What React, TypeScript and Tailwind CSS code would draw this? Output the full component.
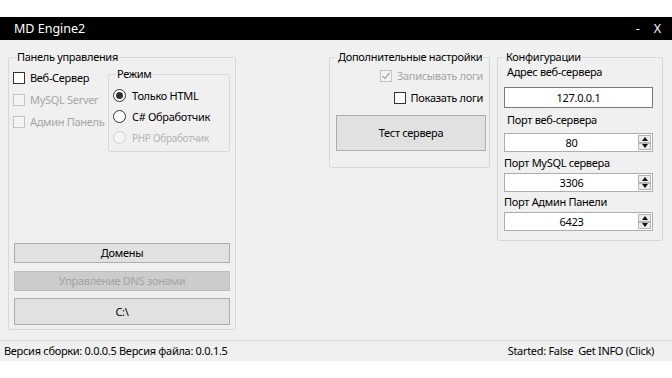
import React from 'react';

const font = "font-['Noto_Sans',sans-serif]";

interface CheckProps {
  label: string;
  checked?: boolean;
  disabled?: boolean;
}

const CheckBox: React.FC<CheckProps> = ({ label, checked = false, disabled = false }) => (
  <div className="flex h-[22px] items-center gap-[5px] whitespace-nowrap">
    <span
      className={`flex h-[12px] w-[12px] shrink-0 items-center justify-center border ${
        disabled ? 'border-[#c4c4c4] bg-[#f4f4f4]' : 'border-[#333333] bg-white'
      }`}
    >
      {checked && (
        <svg width="10" height="10" viewBox="0 0 10 10">
          <path d="M1.5 5 L4 7.5 L8.5 2" fill="none" stroke={disabled ? '#a8a8a8' : '#333'} strokeWidth="1.4" />
        </svg>
      )}
    </span>
    <span className={disabled ? 'text-[#a6a6a6]' : 'text-black'}>{label}</span>
  </div>
);

const Radio: React.FC<CheckProps> = ({ label, checked = false, disabled = false }) => (
  <div className="flex h-[21px] items-center gap-[6px] whitespace-nowrap">
    <span
      className={`flex h-[13px] w-[13px] shrink-0 items-center justify-center rounded-full border ${
        disabled ? 'border-[#d0d0d0] bg-[#f4f4f4]' : 'border-[#333333] bg-white'
      }`}
    >
      {checked && <span className="h-[7px] w-[7px] rounded-full bg-[#333333]" />}
    </span>
    <span className={disabled ? 'text-[10px] text-[#b4b4b4]' : 'text-black'}>{label}</span>
  </div>
);

const GroupBox: React.FC<{ title: string; className?: string; children: React.ReactNode }> = ({
  title,
  className = '',
  children,
}) => (
  <fieldset className={`rounded-[2px] border border-[#d8d8d8] ${className}`}>
    <legend className="ml-[7px] whitespace-nowrap px-[1px] text-[11px] leading-[14px] text-black">{title}</legend>
    {children}
  </fieldset>
);

const WinButton: React.FC<{ label: string; className?: string; disabled?: boolean }> = ({
  label,
  className = '',
  disabled = false,
}) => (
  <div
    className={`flex items-center justify-center whitespace-nowrap border ${
      disabled ? 'border-[#bfbfbf] bg-[#cccccc] text-[#a3a3a3]' : 'border-[#adadad] bg-[#e1e1e1] text-black'
    } ${className}`}
  >
    {label}
  </div>
);

const Arrow: React.FC<{ up?: boolean }> = ({ up = false }) => (
  <div className="flex flex-1 items-center justify-center border border-[#b5b5b5] bg-[#ececec]">
    <svg width="6" height="4" viewBox="0 0 6 4">
      <path d={up ? 'M0 4 L3 0 L6 4 Z' : 'M0 0 L6 0 L3 4 Z'} fill="#111" />
    </svg>
  </div>
);

const SpinBox: React.FC<{ value: string; className?: string }> = ({ value, className = '' }) => (
  <div className={`flex h-[19px] w-[149px] items-stretch border border-[#abadb3] bg-white ${className}`}>
    <div className="flex flex-1 items-center justify-center text-black">{value}</div>
    <div className="my-[1px] mr-[1px] flex w-[13px] flex-col">
      <Arrow up />
      <Arrow />
    </div>
  </div>
);

export default function App() {
  return (
    <div
      className={`flex h-[378px] w-[672px] flex-col bg-white text-[11px] leading-[14px] tracking-[-0.3px] ${font}`}
    >
      <div className="h-[17px]" />

      {/* Title bar */}
      <div className="flex h-[23px] items-center bg-black pl-[14px] pr-[11px] text-[12.5px] tracking-normal text-white">
        <span>MD Engine2</span>
        <span className="ml-auto">-</span>
        <span className="ml-[14px]">X</span>
      </div>

      {/* Body */}
      <div className="flex h-[321px] flex-col bg-[#f0f0f0]">
        <div className="flex h-[300px] items-start pl-[8px] pt-[10px]">
          {/* Панель управления */}
          <GroupBox title="Панель управления" className="h-[280px] w-[228px] shrink-0">
            <div className="flex h-[265px] flex-col px-[4px]">
              <div className="flex items-start pt-[3px]">
                <div className="flex w-[95px] shrink-0 flex-col">
                  <CheckBox label="Веб-Сервер" />
                  <CheckBox label="MySQL Server" disabled />
                  <CheckBox label="Админ Панель" disabled />
                </div>
                <GroupBox title="Режим" className="h-[85px] w-[122px] shrink-0">
                  <div className="flex flex-col pl-[4px] pt-[4px]">
                    <Radio label="Только HTML" checked />
                    <Radio label="C# Обработчик" />
                    <Radio label="PHP Обработчик" disabled />
                  </div>
                </GroupBox>
              </div>
              <div className="mx-[1px] mt-auto flex flex-col pb-[4px]">
                <WinButton label="Домены" className="h-[20px]" />
                <WinButton label="Управление DNS зонами" disabled className="mt-[8px] h-[20px]" />
                <WinButton label="C:\" className="mt-[7px] h-[27px]" />
              </div>
            </div>
          </GroupBox>

          {/* Дополнительные настройки */}
          <GroupBox title="Дополнительные настройки" className="ml-[93px] h-[118px] w-[161px] shrink-0">
            <div className="flex flex-col pt-[1px]">
              <div className="flex justify-end pr-[6px]">
                <CheckBox label="Записывать логи" checked disabled />
              </div>
              <div className="flex justify-end pr-[6px]">
                <CheckBox label="Показать логи" />
              </div>
              <WinButton label="Тест сервера" className="ml-[6px] mt-[6px] h-[36px] w-[150px]" />
            </div>
          </GroupBox>

          {/* Конфигурации */}
          <GroupBox title="Конфигурации" className="ml-[7px] h-[191px] w-[166px] shrink-0">
            <div className="flex flex-col whitespace-nowrap pl-[6px]">
              <div className="flex h-[16px] items-center pl-[3px]">Адрес веб-сервера</div>
              <div className="mt-[7px] flex h-[21px] w-[149px] items-center justify-center border border-[#7a7a7a] bg-white">
                127.0.0.1
              </div>
              <div className="mt-[4px] flex h-[16px] items-center pl-[3px]">Порт веб-сервера</div>
              <SpinBox value="80" className="mt-[5px]" />
              <div className="mt-[3px] flex h-[16px] items-center">Порт MySQL сервера</div>
              <SpinBox value="3306" className="mt-[2px]" />
              <div className="mt-[2px] flex h-[16px] items-center">Порт Админ Панели</div>
              <SpinBox value="6423" className="mt-[2px]" />
            </div>
          </GroupBox>
        </div>

        {/* Status bar */}
        <div className="flex h-[21px] items-center whitespace-nowrap border-t border-[#d7d7d7] pl-[4px] pr-[18px]">
          <span>Версия сборки: 0.0.0.5 Версия файла: 0.0.1.5</span>
          <span className="ml-auto">Started: False</span>
          <span className="ml-[5px]">Get INFO (Click)</span>
        </div>
      </div>

      <div className="flex-1" />
    </div>
  );
}
